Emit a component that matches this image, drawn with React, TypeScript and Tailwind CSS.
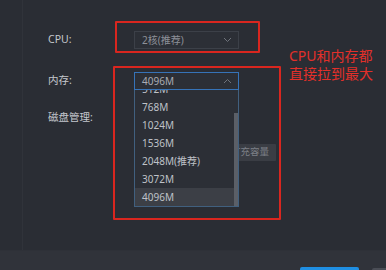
const memOptions = ["512M", "768M", "1024M", "1536M", "2048M(推荐)", "3072M", "4096M"];

function Chevron({ up }: { up?: boolean }) {
  return (
    <svg width="9" height="6" viewBox="0 0 9 6" fill="none" className="text-[#6f737b]">
      <path d={up ? "M1 5 L4.5 1.5 L8 5" : "M1 1 L4.5 4.5 L8 1"} stroke="currentColor" strokeWidth="1" />
    </svg>
  );
}

export default function App() {
  const selected = "4096M";

  return (
    <div
      className="relative h-[270px] w-[386px] overflow-hidden bg-[#2a2d34]"
      style={{ fontFamily: '"Noto Sans", "Noto Sans CJK SC", sans-serif' }}
    >
      <div className="flex h-[250px]">
        <div className="w-[23px] shrink-0 border-r border-[#30333a]" />

        <div className="relative flex-1 pl-[25px] pt-[31px] text-[10.5px] text-[#c4c7cd]">
          {/* CPU */}
          <div className="flex h-[18px] items-center">
            <span className="w-[86px]">CPU:</span>
            <div className="flex h-[18px] w-[105px] items-center justify-between border border-[#3c4048] bg-[#2c2f36] pl-[7px] pr-[6px] text-[10px] text-[#8d9098]">
              <span>2核(推荐)</span>
              <Chevron />
            </div>
          </div>

          {/* 内存 */}
          <div className="mt-[23px] flex h-[18px] items-center">
            <span className="w-[86px]">内存:</span>
            <div className="flex h-[18px] w-[105px] items-center justify-between border border-[#3673b8] bg-[#2c2f36] pl-[7px] pr-[6px] text-[10px] text-[#a9acb3]">
              <span>{selected}</span>
              <Chevron up />
            </div>
          </div>

          {/* 磁盘管理 */}
          <div className="mt-[19px] flex h-[18px] items-center">
            <span className="w-[86px]">磁盘管理:</span>
          </div>
          <div className="mt-[17px] flex pl-[176px]">
            <div className="flex h-[17px] w-[52px] items-center justify-center rounded-[1px] bg-[#3a3d44] text-[9.5px] text-[#7d8088]">
              扩充容量
            </div>
          </div>

          {/* dropdown list */}
          <div className="absolute left-[111px] top-[90px] flex h-[117px] w-[105px] overflow-hidden border border-t-0 border-[#41607f] bg-[#2c2f36] text-[10px] text-[#bfc2c8]">
            <div className="-mt-[10px] flex-1">
              {memOptions.map((opt) => (
                <div
                  key={opt}
                  className={
                    opt === selected
                      ? "flex h-[18px] items-center bg-[#3c3f46] pl-[7px]"
                      : "flex h-[18px] items-center pl-[7px]"
                  }
                >
                  {opt}
                </div>
              ))}
            </div>
            <div className="flex w-[4px] flex-col">
              <div className="h-[23px]" />
              <div className="flex-1 bg-[#5b5f67]" />
            </div>
          </div>
        </div>
      </div>

      {/* footer */}
      <div className="relative h-[20px] border-t border-[#2e3138] bg-[#30333a]">
        <div className="absolute left-[300px] top-[16px] h-[6px] w-[59px] rounded-t-[2px] bg-[#1f8fe3]" />
        <div className="absolute left-[372px] top-[17px] h-[6px] w-[20px] rounded-t-[2px] bg-[#4a4d55]" />
      </div>

      {/* annotations */}
      <div className="absolute left-[115px] top-[21px] h-[32px] w-[145px] rounded-[1px] border-2 border-[#d9261f]" />
      <div className="absolute left-[113px] top-[66px] h-[154px] w-[168px] rounded-[1px] border-2 border-[#d9261f]" />
      <div className="absolute left-[289px] top-[47px] text-[14px] leading-[18px] text-[#e2302a]">
        <div>CPU和内存都</div>
        <div>直接拉到最大</div>
      </div>
    </div>
  );
}
